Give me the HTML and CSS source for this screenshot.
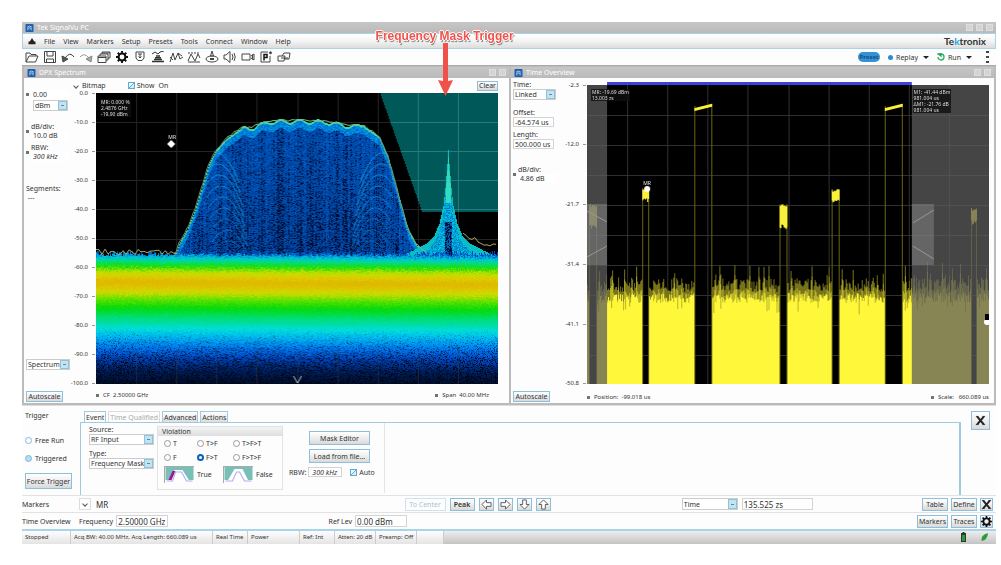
FILE: index.html
```html
<!DOCTYPE html>
<html lang="en">
<head>
<meta charset="utf-8">
<title>Tek SignalVu PC</title>
<link rel="stylesheet" href="styles.css">
</head>
<body>
<svg width="0" height="0" class="defs" aria-hidden="true">
  <symbol id="tek" viewBox="0 0 10 10"><rect width="10" height="10" rx="1" fill="#1f5fae"/><path d="M2 4q3-3 6 0M3 8V5h4v3" fill="none" stroke="#cfe4fa"/></symbol>
  <symbol id="gear" viewBox="0 0 14 14"><circle cx="7" cy="7" r="4" fill="none" stroke="#111" stroke-width="2.4"/><path d="M7 0v3M7 11v3M0 7h3M11 7h3M2 2l2 2M10 10l2 2M12 2l-2 2M2 12l2-2" stroke="#111" stroke-width="2.2"/></symbol>
  <symbol id="cross" viewBox="0 0 10 10"><path d="M2 1.500l6 7M8 1.500l-6 7" fill="none" stroke="#222" stroke-width="1.800"/><path d="M.8 1.300h2.400M6.800 1.300h2.400M.8 8.700h2.400M6.800 8.700h2.400" stroke="#222" stroke-width=".8"/></symbol>
  <symbol id="arrow" viewBox="0 0 12 12"><path d="M1 6l5-5v3h5v4H6v3z" fill="#fff" stroke="#555"/></symbol>
</svg>
<main class="app">
  <header class="titlebar"><svg class="logo"><use href="#tek"/></svg><span>Tek SignalVu PC</span><i class="wins"><b></b><b></b><b></b></i></header>
  <nav class="menu">
    <svg class="tri" viewBox="0 0 8 8"><path d="M4 0l2.500 4H8v3H0V4h1.500z" fill="#222"/></svg>
    <a href="#">File</a><a href="#">View</a><a href="#">Markers</a><a href="#">Setup</a><a href="#">Presets</a><a href="#">Tools</a><a href="#">Connect</a><a href="#">Window</a><a href="#">Help</a>
    <span class="brand">Te<em>k</em>tronix</span>
  </nav>
  <div class="toolbar">
    <button aria-label="Open"><svg viewBox="0 0 14 12"><path d="M1 11V2h4l1 1.500h5V5M1 11l3-6h9l-2.500 6z"/></svg></button>
    <button aria-label="Save"><svg viewBox="0 0 14 12"><path d="M1.500.5h11v11h-11zM4 .5v4.500h6V.5M3.500 11.500V8h7v3.500"/></svg></button>
    <button aria-label="Undo"><svg viewBox="0 0 14 12"><path d="M13 6Q9 0 4 7"/><path d="M1 5l1 6 5-3z" fill="#555"/></svg></button>
    <button aria-label="Redo"><svg viewBox="0 0 14 12"><path d="M1 6q4-5 9 1" stroke="#999"/><path d="M13 5l-1 6-5-3z" fill="#aaa" stroke="#888"/></svg></button>
    <button aria-label="Windows"><svg viewBox="0 0 14 12"><path d="M1 5h8v6.500H1zM1 6.500h8M3 5V3h8v6H9M5 3V1h8v6h-2M5 2h8"/></svg></button>
    <button aria-label="Settings"><svg viewBox="0 0 14 14"><use href="#gear"/></svg></button>
    <button aria-label="Trigger"><svg viewBox="0 0 14 12"><path d="M3 1h8v6L9 9.500H5L3 7zM5 3h4M7 3v4M5.500 5.500L7 7l1.500-1.500"/></svg></button>
    <button aria-label="Spectrum"><svg viewBox="0 0 14 12"><path d="M1 3l3-2 3 2 2-2 4-1" stroke="#333"/><path d="M5 5h4M4 6.700h6M3 8.400h8M1 10.500h12" stroke="#333" stroke-width="1.500"/></svg></button>
    <button aria-label="Analysis"><svg viewBox="0 0 14 12"><path d="M1 11l3-9 2 7 3-7 2 6 3-2M1 6l3 3M9 2l4 3"/></svg></button>
    <button aria-label="Trace"><svg viewBox="0 0 14 12"><path d="M1 2h12" stroke-dasharray="2 1"/><path d="M1 10l3-7 4 7 3-7 2 4M1 11h12"/></svg></button>
    <button aria-label="Preset"><svg viewBox="0 0 14 12"><path d="M7 0L5.500 5h3z"/><ellipse cx="7" cy="8" rx="6" ry="3"/><path d="M5 8h4" stroke-width="2"/></svg></button>
    <button aria-label="Audio"><svg viewBox="0 0 14 12"><path d="M1 4h2l4-3.500v11L3 8H1zM9 3q2 3 0 6M11 2q2.500 4 0 8"/></svg></button>
    <button aria-label="Record"><svg viewBox="0 0 14 12"><path d="M1 3h8v6H1zM10 5l3-2v6l-3-2M11.500 3.500v5"/></svg></button>
    <button aria-label="Preset list"><svg viewBox="0 0 14 12"><path d="M2 1h7M2 1v10h9V5"/><path d="M5 9.500V3.500h3v3H5" stroke="#111" stroke-width="1.500"/><circle cx="11.500" cy="1.800" r="1" fill="#333"/></svg></button>
    <button aria-label="Link"><svg viewBox="0 0 14 12"><path d="M1 5h7l-1 5H1zM5 5l2-3h6l-1 6H8M4 7h7"/></svg></button>
    <span class="spacer"></span>
    <button class="pill">Preset</button>
    <button class="txt"><i class="dot"></i>Replay<i class="down"></i></button>
    <button class="txt"><svg class="run" viewBox="0 0 8 8"><path d="M2 1h2a3 3 0 1 1-3 3M1 1l3-.5V3z"/></svg>Run<i class="down"></i></button>
    <button class="kebab" aria-label="More"></button>
  </div>

  <section class="panels">
    <article class="panel dpx">
      <header class="titlebar"><svg class="logo"><use href="#tek"/></svg><span>DPX Spectrum</span><i class="wins"><b></b><b></b></i></header>
      <div class="body">
        <div class="side">
          <label class="bul top"><input class="bare" value="0.00" aria-label="Reference level"></label>
          <span class="sel unit"><select aria-label="Unit"><option>dBm</option></select></span>
          <label class="bul g1">dB/div:<input class="bare" value="10.0 dB"></label>
          <label class="bul g2">RBW:<input class="bare it" value="300 kHz"></label>
          <div class="seg">Segments:<br>&nbsp;---</div>
          <span class="sel spec"><select aria-label="View"><option>Spectrum</option></select></span>
          <button class="btn auto">Autoscale</button>
        </div>
        <div class="chart">
          <div class="head"><span class="caret"></span>Bitmap<label class="show"><input type="checkbox" checked>Show</label><span>On</span><button class="btn clear">Clear</button></div>
          <ol class="axis"><li>0.0</li><li>-10.0</li><li>-20.0</li><li>-30.0</li><li>-40.0</li><li>-50.0</li><li>-60.0</li><li>-70.0</li><li>-80.0</li><li>-90.0</li><li>-100.0</li></ol>
          <div class="plot"><canvas id="dpx" width="401" height="291"></canvas>
            <p class="read r1">MR: 0.000 %<br>2.4876 GHz<br>-19.90 dBm</p><span class="mk m1">MR</span></div>
          <div class="foot"><span class="bul">CF &nbsp;2.50000 GHz</span><span class="bul">Span &nbsp;40.00 MHz</span></div>
        </div>
      </div>
    </article>
    <article class="panel time">
      <header class="titlebar"><svg class="logo"><use href="#tek"/></svg><span>Time Overview</span><i class="wins"><b></b><b></b></i></header>
      <div class="body">
        <div class="side">
          <label>Time:<span class="sel"><select><option>Linked</option></select></span></label>
          <label class="g3">Offset:<input value="-64.574 us"></label>
          <label>Length:<input value="500.000 us"></label>
          <label class="bul g4">dB/div:<input class="bare" value="4.86 dB"></label>
          <button class="btn auto">Autoscale</button>
        </div>
        <div class="chart">
          <div class="head"></div>
          <ol class="axis"><li>-2.3</li><li>-12.0</li><li>-21.7</li><li>-31.4</li><li>-41.1</li><li>-50.8</li></ol>
          <div class="plot"><canvas id="time" width="401" height="302"></canvas>
            <p class="read r2">MR: -19.69 dBm<br>13.003 zs</p><p class="read r3">M1: -41.44 dBm<br>981.004 us<br>ΔM1: -21.76 dB<br>981.004 us</p><span class="mk m2">MR</span></div>
          <div class="foot"><span class="bul">Position: &nbsp;-99.018 us</span><span class="bul">Scale: &nbsp; 660.089 us</span></div>
        </div>
      </div>
    </article>
  </section>

  <section class="trigger">
    <div class="mode">
      <span>Trigger</span>
      <label><input type="radio" name="mode">Free Run</label>
      <label><input type="radio" name="mode" class="soft">Triggered</label>
      <button class="btn force">Force Trigger</button>
    </div>
    <div class="tabs">
      <div class="tablist"><button class="on">Event</button><button disabled>Time Qualified</button><button>Advanced</button><button>Actions</button></div>
      <div class="pane">
        <div class="src">
          <label>Source:<span class="sel"><select><option>RF Input</option></select></span></label>
          <label>Type:<span class="sel"><select><option>Frequency Mask</option></select></span></label>
        </div>
        <fieldset class="viol">
          <legend>Violation</legend>
          <div class="opts">
            <label><input type="radio" name="v">T</label><label><input type="radio" name="v">T&gt;F</label><label><input type="radio" name="v">T&gt;F&gt;T</label>
            <label><input type="radio" name="v">F</label><label><input type="radio" name="v" checked>F&gt;T</label><label><input type="radio" name="v">F&gt;T&gt;F</label>
          </div>
          <div class="pics">
            <svg viewBox="0 0 28 16"><path fill="#78bfb8" d="M0 0h28v13H0z"/><path d="M3 14L9 3h8l7 11z" fill="#fff"/><path d="M3 13L7 4h3L6 13z" fill="#a0158c"/><path d="M1 14h6l3-9h6l5 9h6" fill="none" stroke="#b5aef5" stroke-width="1.200"/></svg>True
            <svg viewBox="0 0 28 16"><path fill="#78bfb8" d="M0 0h28v13H0z"/><path d="M3 14L10 2h8l6 12z" fill="#fff"/><path d="M1 14h7l4-9h3l5 9h7" fill="none" stroke="#b5aef5" stroke-width="1.200"/></svg>False
          </div>
        </fieldset>
        <div class="mask">
          <button class="btn">Mask Editor</button>
          <button class="btn">Load from file...</button>
          <div class="rbw"><label for="rbw">RBW:</label><input id="rbw" class="it" value="300 kHz"><label><input type="checkbox" checked>Auto</label></div>
        </div>
      </div>
    </div>
    <button class="btn close" aria-label="Close"><svg><use href="#cross"/></svg></button>
  </section>

  <section class="row">
    <span class="name">Markers</span>
    <button class="drop" aria-label="Choose marker"><span class="caret"></span></button><span class="mr">MR</span>
    <div class="nav"><button class="btn" disabled>To Center</button><button class="btn peak">Peak</button>
      <button class="btn" aria-label="Left"><svg><use href="#arrow"/></svg></button><button class="btn" aria-label="Right"><svg class="right"><use href="#arrow"/></svg></button><button class="btn" aria-label="Down"><svg class="dn"><use href="#arrow"/></svg></button><button class="btn" aria-label="Up"><svg class="up"><use href="#arrow"/></svg></button></div>
    <div class="val"><span class="sel"><select aria-label="Quantity"><option>Time</option></select></span><input value="135.525 zs" aria-label="Marker time"></div>
    <div class="end"><button class="btn">Table</button><button class="btn">Define</button><button class="btn sq" aria-label="Close markers"><svg><use href="#cross"/></svg></button></div>
  </section>
  <section class="row">
    <span class="name">Time Overview</span>
    <label>Frequency<input value="2.50000 GHz"></label>
    <label class="ref">Ref Lev<input value="0.00 dBm"></label>
    <div class="end"><button class="btn">Markers</button><button class="btn">Traces</button><button class="btn sq" aria-label="Settings"><svg><use href="#gear"/></svg></button></div>
  </section>
  <footer class="status">
    <span class="s1">Stopped</span><span class="s2">Acq BW: 40.00 MHz, Acq Length: 660.089 us</span><span class="s3">Real Time</span><span class="s4">Power</span><span class="s3">Ref: Int</span><span class="s5">Atten: 20 dB</span><span class="s5">Preamp: Off</span><span class="s6"></span>
    <div class="icons"><svg viewBox="0 0 8 10"><path d="M3 0h2v1h1.500v9h-5V1H3z" fill="#333"/><path d="M2.500 3h3v6h-3z" fill="#1fa52f"/></svg><svg viewBox="0 0 8 10"><path d="M1 9Q0 3 7.500 1 7 8 1 9z" fill="#2f9a3a"/></svg></div>
  </footer>

  <div class="note">Frequency Mask Trigger<svg viewBox="0 0 16 54"><path d="M6 0h5v38l5-1-7.500 16L1 37l5 1z" fill="#f0524a"/></svg></div>
</main>
<script src="plots.js"></script>
</body>
</html>
```
FILE: styles.css
```css
* { box-sizing: border-box; }
body { margin: 0; background: #fff; color: #333; font: 7px/9px "Noto Sans", "Open Sans", sans-serif; }
button, input, select { font: inherit; color: inherit; margin: 0; padding: 0; border: 0; background: none; border-radius: 0; }
select { appearance: none; width: 100%; height: 100%; padding: 0 1px; border: 1px solid #ccc; background: #fff; }
input { height: 10px; padding: 0 1px; border: 1px solid #d4d4d4; background: #fff; }
a { color: inherit; text-decoration: none; }
ol, p { margin: 0; padding: 0; list-style: none; }
.defs { position: absolute; }
.app { position: relative; margin: 22px 5px 0 22px; background: #fdfdfd; }
.titlebar { display: flex; align-items: center; gap: 3px; height: 11px; padding: 0 3px; background: linear-gradient(#c6c6c6, #bababa); color: #fff; }
.logo { width: 9px; height: 8px; }
.wins { display: flex; gap: 3px; margin-left: auto; }
.wins b { width: 7px; height: 7px; background: #d4d4d4; border: 1px solid #dedede; }
.menu { display: flex; align-items: center; gap: 8px; height: 16px; padding: 0 9px 0 5px; border: 1px solid #a9d3e6; background: linear-gradient(#fff, #f4f4f4 50%, #dcdcdc); }
.tri { width: 8px; height: 7px; }
.brand { margin-left: auto; font: bold 10px/10px Lato, sans-serif; color: #333; }
.brand em { font-style: normal; color: #16a9dc; }
.toolbar { display: flex; align-items: center; gap: 4px; height: 17px; padding: 0 4px 0 3px; border-bottom: 1px solid #aaa; }
.toolbar > button { flex: none; height: 12px; }
.toolbar > button > svg:not(.run) { display: block; width: 14px; height: 12px; fill: none; stroke: #444; }
.spacer { flex: 1; }
.toolbar .pill { width: 22px; height: 10px; border-radius: 5px; background: #3492d4; color: #134f80; font-weight: bold; font-size: 6px; }
.txt { display: flex; align-items: center; gap: 3px; margin-left: 4px; }
.dot { width: 5px; height: 5px; border-radius: 50%; background: #2b8bd0; }
.down { border: 3px solid transparent; border-top-color: #222; border-bottom: 0; margin-left: 2px; }
.run { width: 8px; height: 8px; fill: none; stroke: #25ae5a; stroke-width: 1.300; }
.toolbar .kebab { width: 3px; margin: 0 3px 0 10px; background: repeating-linear-gradient(#444 0 2px, transparent 2px 5px); }
.panels { display: grid; grid-template-columns: 487fr 485fr; gap: 2px; padding: 1px 2px 2px 2px; background: #bbb; }
.panel { background: #fdfdfd; min-width: 0; }
.body { display: flex; height: 325px; }
.side { display: flex; flex-direction: column; align-items: flex-start; width: 46px; padding: 12px 0 1px 2px; }
.side label { display: block; }
.side input { display: block; width: 41px; }
.side .bare, .bare { border: 0; padding: 0 2px; width: 38px; height: 9px; }
.it { font-style: italic; }
.bul { padding-left: 7px; background: linear-gradient(#6a7868, #6a7868) 0 50% / 3px 3px no-repeat; }
.side .bul { padding-left: 5px; }
.sel { position: relative; display: block; width: 43px; height: 11px; }
.sel::after { content: ""; position: absolute; right: 1px; top: 1px; bottom: 1px; width: 7px; background: linear-gradient(#4d8fb0, #4d8fb0) 50% 50% / 3px 1px no-repeat, #c4e3f1; border: 1px solid #8fc3dc; }
.unit { width: 35px; margin: 1px 0 0 7px; }
.g1 { margin-top: 11px; }
.g2 { margin-top: 3px; }
.seg { margin-top: 23px; }
.spec { width: 44px; margin-top: auto; }
.btn { height: 13px; padding: 0 3px; border: 1px solid #8cc0da; background: linear-gradient(#fff, #eee 50%, #d9d9d9); white-space: nowrap; }
.auto { width: 37px; height: 11px; padding: 0; line-height: 8px; margin-top: 21px; }
.chart { flex: 1; min-width: 0; display: grid; grid-template: 15px 291px 19px / 26px 1fr; padding-right: 11px; }
.head { grid-column: 1 / 3; display: flex; align-items: center; gap: 4px; padding-left: 4px; }
.caret { width: 4px; height: 4px; border: solid #555; border-width: 0 1px 1px 0; rotate: 45deg; }
.show { display: flex; align-items: center; margin-left: 18px; gap: 2px; }
input[type=checkbox] { appearance: none; width: 7px; height: 7px; padding: 0; border: 1px solid #62abd0; background: linear-gradient(135deg, #e8f6fd 40%, #62a9cc 45% 58%, #d5edf8 60%); }
input[type=radio] { appearance: none; width: 7px; height: 7px; padding: 0; border: 1px solid #999; border-radius: 50%; background: #fff; }
input[type=radio]:checked { border: 2px solid #0b62b8; }
.mode input[type=radio] { border-color: #7db8d8; }
.mode .soft { background: #b6ddf0; }
.clear { margin-left: auto; height: 10px; line-height: 7px; padding: 0 1px; }
.axis { display: flex; flex-direction: column; justify-content: space-between; }
.axis li { display: flex; height: 0; align-items: center; justify-content: flex-end; gap: 4px; font-size: 6px; }
.axis li::after { content: ""; flex: none; width: 3px; height: 1px; margin-right: 1px; background: #999; }
.plot { position: relative; min-width: 0; }
.plot canvas { display: block; width: 100%; height: 100%; }
.read { position: absolute; font-size: 5px; line-height: 6px; color: #ddd; background: rgba(15, 15, 15, .8); white-space: nowrap; padding: 0 1px; }
.r1 { left: 1%; top: 6px; }
.r2 { left: 1%; top: 7px; }
.r3 { left: 81%; top: 7px; }
.mk { position: absolute; font-size: 5px; line-height: 6px; color: #eee; }
.m1 { left: 18%; top: 41px; }
.m2 { left: 14%; top: 98px; }
.foot { grid-column: 2; display: flex; justify-content: space-between; align-items: center; padding: 3px 9px 0 0; font-size: 6px; }
.time .side { width: 50px; padding-top: 2px; }
.time .chart { grid-template: 4px 302px 19px / 26px 1fr; padding-right: 5px; }
.time .axis { padding-top: 3px; }
.time .foot { padding: 8px 0 0; }
.g3 { margin-top: 8px; }
.g3 + label { margin-top: 3px; }
.g4 { margin-top: 16px; }
.time .auto { margin-top: auto; }
.trigger { display: flex; height: 90px; padding: 5px 6px 0 0; border-top: 1px solid #ddd; }
.mode { width: 58px; padding-left: 3px; display: flex; flex-direction: column; align-items: flex-start; }
.mode label { display: flex; align-items: center; gap: 3px; margin-top: 9px; }
.mode span + label { margin-top: 16px; }
.force { margin-top: 10px; height: 16px; padding: 0; width: 47px; }
.tabs { flex: 1; display: flex; flex-direction: column; }
.tablist { display: flex; gap: 2px; padding-left: 4px; height: 11px; }
.tablist button { padding: 0 1px; border: 1px solid #9fcbe0; border-bottom: 0; background: linear-gradient(#fff, #ddd); }
.tablist .on { background: #fdfdfd; }
.tablist button:disabled { color: #aaa; border-color: #ddd; background: none; }
.pane { flex: 1; display: flex; gap: 3px; padding-left: 8px; border: solid #9fcbe0; border-width: 1px 2px 0 1px; }
.src { width: 65px; padding-top: 2px; }
.src label { display: block; margin-bottom: 4px; }
.src .sel { width: 100%; }
.viol { width: 126px; height: 64px; margin: 3px 0 0; padding: 0; border: 1px solid #e2e2e2; }
.viol legend { float: left; width: 100%; height: 9px; padding: 0 4px; background: linear-gradient(#f4f4f4, #dedede); }
.opts { clear: both; display: grid; grid-template-columns: 33px 36px 1fr; row-gap: 5px; padding: 3px 0 0 6px; }
.opts label, .rbw label { display: flex; align-items: center; gap: 2px; }
.pics { display: grid; grid-template-columns: 30px 23px 30px 1fr; gap: 3px; align-items: center; padding: 4px 0 0 6px; }
.pics svg { width: 30px; height: 17px; border: solid #aaa; border-width: 1px 0 0 1px; }
.mask { width: 99px; height: 70px; padding: 8px 0 0 3px; border-right: 1px solid #e4e4e4; display: flex; flex-direction: column; align-items: flex-start; gap: 4px; }
.mask .btn { width: 61px; height: 14px; margin-left: 20px; }
.rbw { display: flex; align-items: center; gap: 2px; }
.rbw #rbw { width: 34px; margin-right: 6px; padding: 0 3px; }
.close { width: 19px; height: 19px; margin-left: 10px; padding: 0; }
.close svg { width: 11px; height: 11px; display: block; margin: auto; }
.row { display: flex; align-items: center; height: 17px; border-top: 1px solid #e2e2e2; gap: 5px; padding-right: 3px; }
.row .name { width: 52px; white-space: nowrap; }
.mr { font-size: 8px; }
.row .btn { min-width: 26px; height: 13px; padding: 0 1px; }
.row .btn:disabled { width: 41px; color: #a9c3d0; border-color: #cfe2eb; background: none; }
.row label { display: flex; align-items: center; gap: 3px; }
.row input { height: 12px; width: 52px; font-size: 8px; }
.row svg { display: block; width: 11px; height: 11px; margin: auto; }
.drop { width: 12px; height: 12px; border: 1px solid #ddd; display: grid; place-items: center; }
.nav { display: flex; gap: 4px; margin-left: 30%; }
.nav .btn { min-width: 15px; }
.nav .peak { width: 25px; font-weight: 600; }
.right { rotate: 180deg; }
.dn { rotate: -90deg; }
.up { rotate: 90deg; }
.val { display: flex; gap: 4px; margin-left: 13%; }
.val .sel { width: 56px; height: 12px; }
.row .val input { width: 71px; }
.ref { margin-left: 16%; }
.end { display: flex; gap: 3px; margin-left: auto; }
.row .sq { width: 13px; min-width: 13px; padding: 0; }
.status { display: flex; height: 15px; border-top: 2px solid #a9d3e6; background: linear-gradient(#eee, #c4c4c4); font-size: 6px; line-height: 13px; }
.status > span { padding-left: 3px; border-right: 1px solid #ccc; background: linear-gradient(#fdfdfd, #e4e4e4); white-space: nowrap; overflow: hidden; }
.s1 { width: 49px; }
.s2 { width: 142px; }
.s3 { width: 35px; }
.s4 { width: 52px; }
.s5 { width: 41px; }
.s6 { width: 27px; }
.icons { display: flex; gap: 12px; margin-left: auto; padding: 1px 7px 0 0; }
.icons svg { width: 9px; height: 10px; }
.note { position: absolute; top: 7px; left: 36.300%; color: #f0524a; font: bold 12px/14px "Liberation Sans", sans-serif; white-space: nowrap; text-shadow: 1px 0 #fff, -1px 0 #fff, 0 1px #fff, 0 -1px #fff, 1px 2px 1px #777; }
.note svg { display: block; width: 16px; height: 54px; margin: 0 auto; }
```
FILE: plots.js
```js
let seed = 20177;
const rnd = () => (seed = (seed * 16807) % 2147483647) / 2147483647;

function interp(pts, x) {
  if (x <= pts[0][0]) return pts[0].slice(1);
  for (let i = 1; i < pts.length; i++) {
    if (x <= pts[i][0]) {
      const a = pts[i - 1], b = pts[i], t = (x - a[0]) / (b[0] - a[0]);
      return a.slice(1).map((v, k) => v + (b[k + 1] - v) * t);
    }
  }
  return pts[pts.length - 1].slice(1);
}

/* Persistence spectrum */
(function () {
  const c = document.getElementById('dpx'), g = c.getContext('2d'), W = 401, H = 291;
  const img = g.createImageData(W, H);
  const band = [[158, 0, 70, 190], [163, 0, 190, 225], [167, 0, 220, 150], [172, 20, 222, 10], [178, 190, 225, 0], [183, 222, 205, 0], [188, 222, 182, 0], [193, 222, 195, 0], [199, 205, 220, 0], [206, 90, 225, 0], [214, 5, 218, 10], [224, 0, 222, 120], [235, 0, 218, 215], [244, 0, 165, 225], [254, 0, 105, 215], [264, 0, 60, 165], [276, 0, 28, 85], [291, 0, 10, 32]];
  const hump = [[79, 162], [83, 150], [91, 136], [99, 116], [106, 93], [112, 73], [119, 58], [129, 46], [146, 34], [155, 34], [171, 28], [200, 27], [230, 28], [250, 32], [266, 32], [282, 43], [291, 63], [299, 92], [306, 118], [312, 138], [320, 152], [330, 160]];
  const peak = [[0, 56], [1, 70], [3, 94], [5, 112], [9, 130], [14, 142], [22, 150], [35, 157], [50, 164]];
  const cols = Array.from({ length: W }, () => rnd());
  const vert = new Set(), horz = new Set();
  for (let i = 1; i < 10; i++) { vert.add(Math.round(i * 40.1)); horz.add(Math.round(i * 29.1)); }
  for (let x = 0; x < W; x++) {
    const env = (x > 79 && x < 330 ? interp(hump, x)[0] : 999) + 2 * Math.sin(x / 3) * (x > 145 && x < 265);
    const pk = interp(peak, Math.abs(x - 351))[0];
    const top = 157 + rnd() * 6;
    for (let y = 0; y < H; y++) {
      let p = [0, 0, 0];
      const maskEdge = 283 + y * 42 / 119;
      if (x > maskEdge && y < 119) p = [0, 88, 88];
      if (vert.has(x) || horz.has(y)) p = p.map(v => v + 36);
      if (y > env) {
        const d = y - env, n = rnd();
        const s = n * .6 + cols[x] * .3 + .27 - Math.min(.2, d / 600);
        p = s < .42 ? [0, 12, 50] : [0, 20 + s * 75, 75 + s * 130];
        if (d < 9) p = [0, 90 + n * 80, 215];
        if (d < 2) p = [60, 215, 170];
      }
      if (x > 290 && y > pk && Math.abs(x - 351) < 50) {
        const d = Math.abs(x - 351), n = rnd();
        p = [0, 110 + n * 100, 195 + n * 30];
        if (d < 3 && y < 110) p = [50, 220, 140 + y / 2];
        if (d < 4 && y > 128) p = n < .55 ? [0, 15, 60] : [0, 100, 180];
        if (y - pk < 8) p = [10, 190, 200];
      }
      if (y > top) {
        const yy = y - 2.5 * x / W;
        p = interp(band, yy + (rnd() - .5) * 5);
        if (yy > 230) {
          const a = Math.min(.9, (yy - 230) / 40);
          p = p.map(v => v * (1 + a * .2));
          if (rnd() < a * .6) { const k = 1 - a * rnd(); p = p.map(v => v * k); }
        }
        if (vert.has(x) && y > 255) p = p.map(v => v * .6 + 25);
      }
      img.data.set([p[0], p[1], p[2], 255], (y * W + x) * 4);
    }
  }
  g.putImageData(img, 0, 0);
  /* nested arcs on both flanks of the wide signal */
  for (let k = 0; k < 9; k++) {
    g.strokeStyle = `rgba(30,175,235,${.75 - k * .05})`;
    for (const dir of [-1, 1]) {
      g.beginPath();
      let open = false;
      for (let t = 0; t < 32; t++) {
        const u = (t - 12) / 12;
        const x = 203 - dir * (83 - k * 1.5) + dir * (t - 12) * 1.2, y = 60 + k * 11 + u * u * 12;
        if (y > interp(hump, x)[0] + 3 && y < 156) { open ? g.lineTo(x, y) : g.moveTo(x, y); open = true; }
      }
      g.stroke();
    }
  }
  /* maximum trace */
  g.strokeStyle = '#a9a768';
  g.lineWidth = 1;
  for (const [a, b] of [[0, 84], [366, 401]]) {
    g.beginPath();
    for (let x = a; x < b; x += 3) g.lineTo(x, (a ? 145 + (x - 366) * .35 : 162) - rnd() * 6);
    g.stroke();
  }
  g.strokeStyle = '#84bd86';
  g.beginPath();
  for (let x = 79; x < 330; x += 2) g.lineTo(x, interp(hump, x)[0] - 1 + rnd() * 2);
  g.stroke();
  g.strokeStyle = '#bbb';
  g.beginPath(); g.moveTo(197, 283); g.lineTo(201, 290); g.lineTo(205, 283); g.stroke();
  g.fillStyle = '#fff';
  g.beginPath(); g.moveTo(75, 47); g.lineTo(79, 51); g.lineTo(75, 55); g.lineTo(71, 51); g.fill();
})();

/* Amplitude against time */
(function () {
  const c = document.getElementById('time'), g = c.getContext('2d'), W = 401, H = 302, T = 3;
  g.fillStyle = '#000'; g.fillRect(0, T, W, H);
  g.fillStyle = '#fdfdfd'; g.fillRect(0, 0, W, T);
  const gaps = [[2, 10, 122, 144], [55, 62, 106, 118], [107, 125, 0, 0], [192, 200, 122, 145], [244, 252, 107, 119], [297, 315, 0, 0], [383, 389, 126, 140]];
  g.fillStyle = '#303030';
  for (let i = 1; i < 10; i++) { g.fillRect(Math.round(i * 40.1), T, 1, H); g.fillRect(0, T + i * 30, W, 1); }
  for (let x = 0; x < W; x++) {
    if (gaps.some(q => x >= q[0] && x < q[1])) continue;
    const spike = 210 - rnd() * 14 - (rnd() < .18 ? rnd() * 18 : 0), solid = 211 + rnd() * 10 + (rnd() < .1 ? 12 : 0);
    g.fillStyle = '#77731a'; g.fillRect(x, spike, 1, H);
    g.fillStyle = '#b9b428'; g.fillRect(x, spike + 10, 1, H);
    g.fillStyle = '#fff83a'; g.fillRect(x, solid, 1, H);
  }
  for (const [a, b, y1, y2] of gaps) {
    g.fillStyle = '#6b6712';
    const t = y1 || 24;
    g.fillRect(a, t, 1, 302 - t); g.fillRect(b - 1, t, 1, 302 - t);
    g.fillStyle = '#f9f03a';
    if (y1) for (let x = a; x < b; x++) g.fillRect(x, y1 + rnd() * 3, 1, y2 - y1 - rnd() * 3);
    else for (let x = a; x < b; x++) g.fillRect(x, 26 - (x - a) * .25, 1, 3);
  }
  g.fillStyle = 'rgba(93,93,93,.74)';
  g.fillRect(0, T, 20, H); g.fillRect(324, T, 77, H);
  g.fillStyle = 'rgba(150,150,150,.4)';
  g.fillRect(0, 122, 20, 61); g.fillRect(324, 122, 22, 61);
  g.strokeStyle = '#999';
  g.beginPath();
  g.moveTo(0, 129); g.lineTo(20, 140); g.moveTo(0, 175); g.lineTo(20, 164);
  g.moveTo(346, 128); g.lineTo(325, 141); g.moveTo(325, 164); g.lineTo(346, 177);
  g.stroke();
  g.fillStyle = '#3f3fdc'; g.fillRect(20, 0, 304, 3);
  g.fillStyle = '#fff';
  g.beginPath(); g.arc(60, 107, 3, 0, 7); g.fill();
  g.beginPath(); g.arc(399, 240, 3, 0, 7); g.fill();
  g.fillStyle = '#000'; g.fillRect(397, 232, 4, 6);
})();
```
